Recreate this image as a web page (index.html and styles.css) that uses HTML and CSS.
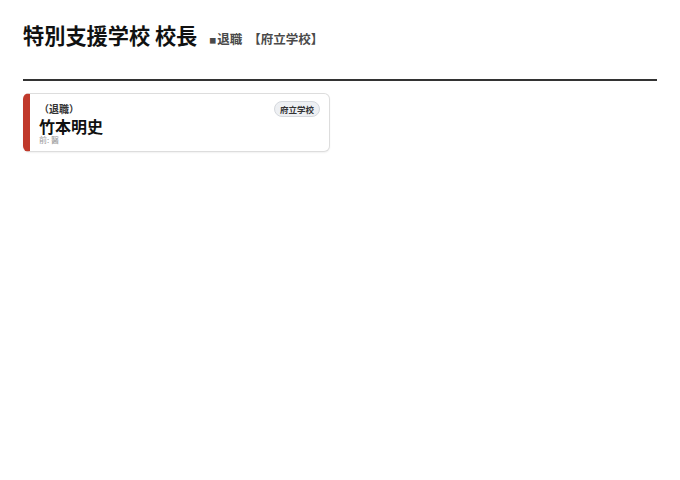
FILE: index.html
```html
<!DOCTYPE html>
<html lang="ja">

<head>
    <meta charset="utf-8">
    <title>特別支援学校 校長</title>
    <link rel="stylesheet" href="styles.css">
</head>

<body>
    <main>
        <header>
            <h1>特別支援学校 校長</h1>
            <span class="sub"><span class="mark">■</span>退職 【府立学校】</span>
        </header>
        <section class="cards">
            <div class="card">
                <div class="card-top">
                    <span class="status">（退職）</span>
                    <span class="badge">府立学校</span>
                </div>
                <div class="name">竹本明史</div>
                <div class="prev">前: 醫</div>
            </div>
        </section>
    </main>
</body>

</html>
```
FILE: styles.css
```css
body {
    margin: 0;
    background: #fff;
    color: #111;
    font-family: "Noto Sans CJK JP", "Noto Sans", sans-serif;
}

main {
    padding: 14px 23px;
}

header {
    display: flex;
    align-items: baseline;
    gap: 12px;
    padding: 2px 0 25px;
    border-bottom: 2px solid #333;
}

h1 {
    font-size: 21.2px;
    font-weight: 700;
    margin: 0;
    line-height: 38px;
}

.sub {
    font-size: 12.5px;
    font-weight: 700;
    color: #4a4a4a;
    word-spacing: 3px;
}

.mark {
    font-size: 7px;
    vertical-align: 1px;
    margin-right: 1px;
}

.cards {
    display: grid;
    grid-template-columns: 1fr 1fr;
    gap: 20px;
    margin-top: 12px;
}

.card {
    background: #fff;
    border: 1px solid #ddd;
    border-left: 7px solid #c0392b;
    border-radius: 6px;
    box-shadow: 0 1px 2px rgba(0, 0, 0, 0.06);
    padding: 6px 9px 6px 9px;
}

.card-top {
    display: flex;
    justify-content: space-between;
    align-items: center;
    height: 17px;
}

.status {
    font-size: 10px;
    font-weight: 700;
    color: #333;
}

.badge {
    font-size: 8.5px;
    font-weight: 700;
    color: #333;
    background: #eef0f3;
    border: 1px solid #d5d8dd;
    border-radius: 10px;
    padding: 1px 5px;
    line-height: 12px;
}

.name {
    font-size: 16px;
    font-weight: 700;
    line-height: 17px;
    margin-top: 1px;
}

.prev {
    font-size: 8px;
    color: #999;
    line-height: 10px;
}
```
